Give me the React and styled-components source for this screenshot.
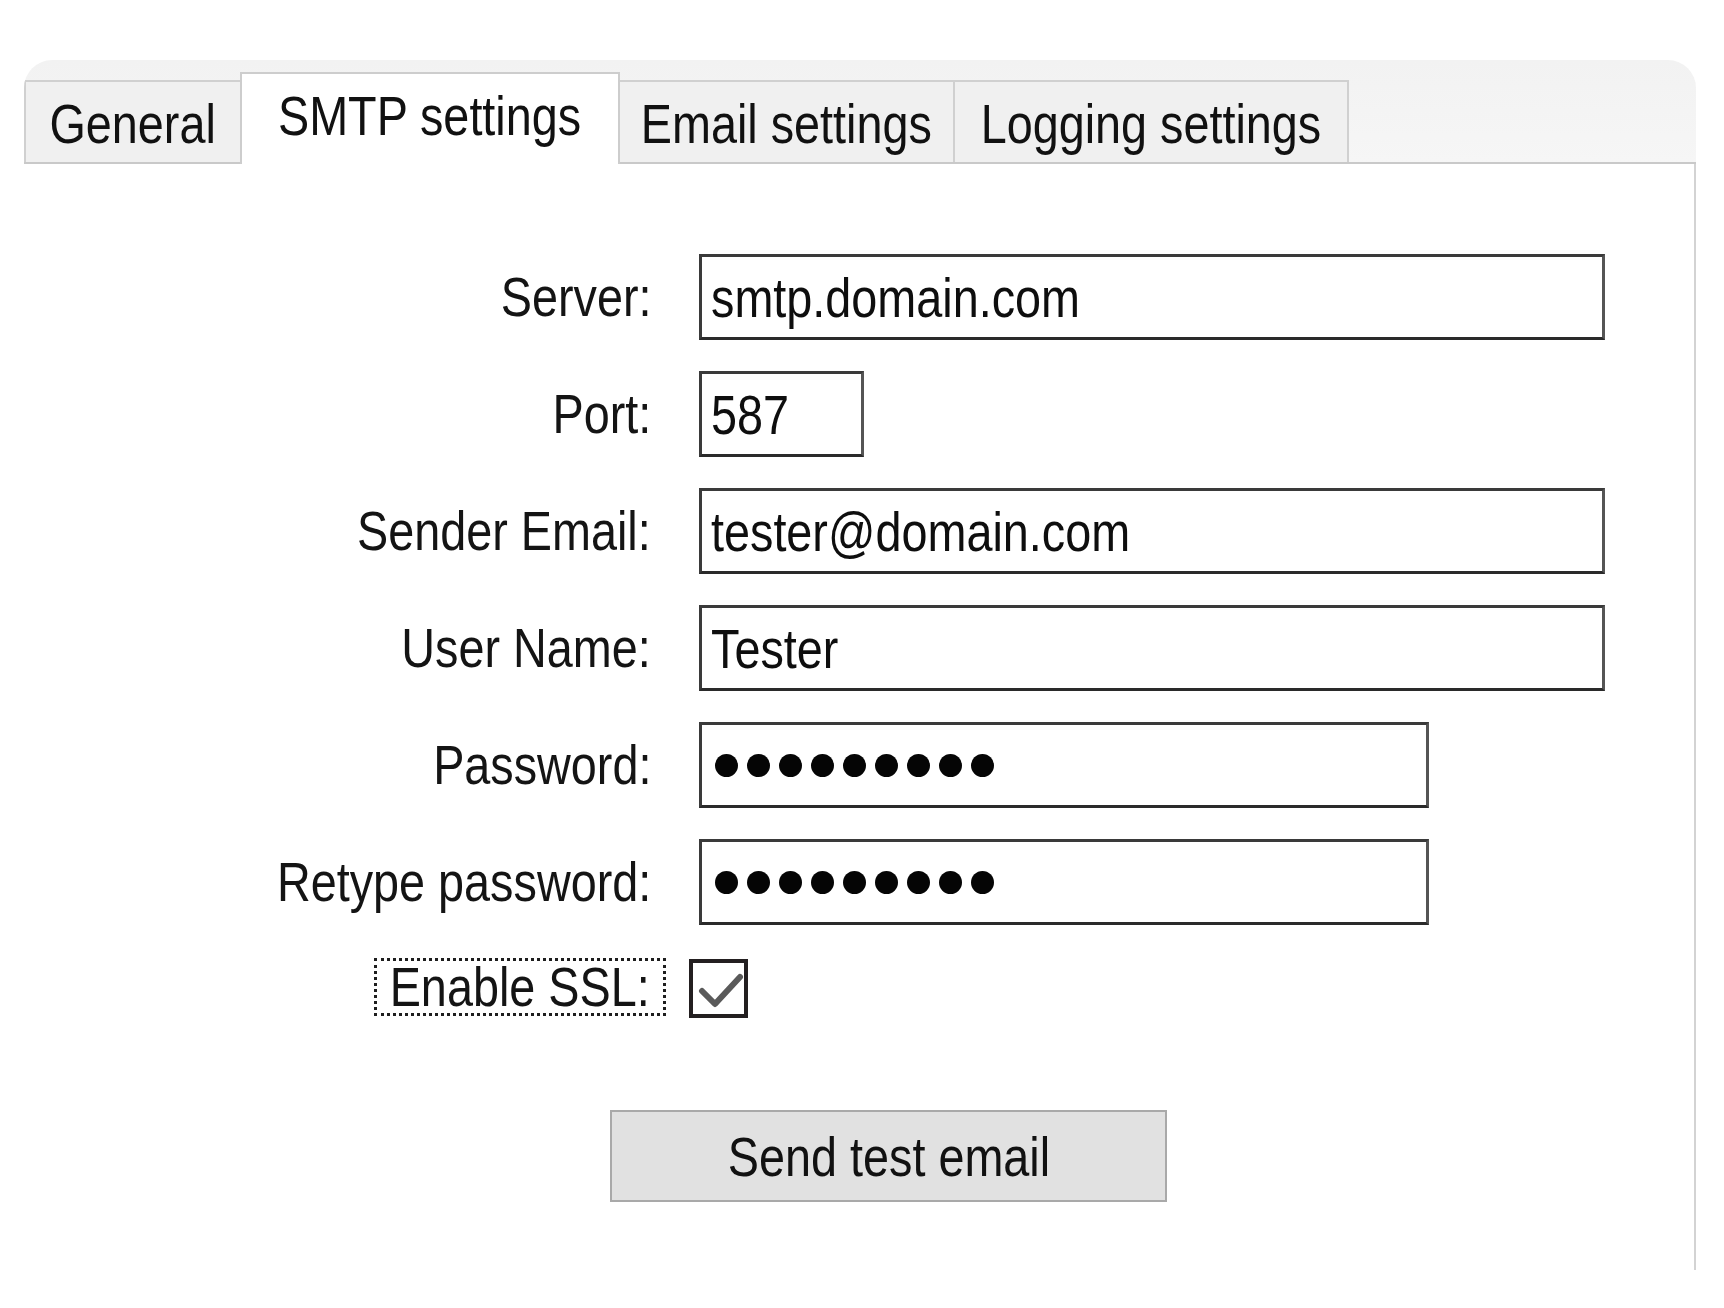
import React from 'react';
import styled, { createGlobalStyle } from 'styled-components';

const GlobalStyle = createGlobalStyle`
    html, body {
        margin: 0;
        padding: 0;
        background: #fff;
    }
    body {
        font-family: "Liberation Sans", Arial, sans-serif;
        color: #141414;
    }
`;

// the dialog font is a narrow sans; Liberation Sans squeezed to Arial Narrow proportions
const Narrow = styled.span`
    display: inline-block;
    white-space: nowrap;
    transform: scaleX(0.835);
    transform-origin: ${(p) => p.origin || 'center'};
`;

const Card = styled.div`
    margin: 60px 0 0 24px;
    width: 1672px;
    border-radius: 28px 28px 0 0;
    overflow: hidden;
`;

const TabStrip = styled.div`
    box-sizing: border-box;
    height: 104px;
    display: flex;
    align-items: flex-end;
    background: linear-gradient(#f2f2f2, #f6f6f6);
    border-bottom: 2px solid #c9c9c9;
`;

const Tab = styled.div`
    box-sizing: border-box;
    width: ${(p) => p.w}px;
    height: ${(p) => (p.active ? 92 : 82)}px;
    margin-left: ${(p) => (p.first ? 0 : -2)}px;
    margin-bottom: ${(p) => (p.active ? -2 : 0)}px;
    padding-top: 10px;
    display: flex;
    justify-content: center;
    border: 2px solid ${(p) => (p.active ? '#cdcdcd' : '#d0d0d0')};
    border-bottom: none;
    background: ${(p) => (p.active ? '#fff' : '#f0f0f0')};
    position: relative;
    z-index: ${(p) => (p.active ? 2 : 1)};
    font-size: 56px;
    line-height: 64px;
    color: #111;
`;

const Page = styled.div`
    box-sizing: border-box;
    height: 1106px;
    padding-top: 90px;
    background: #fff;
    border-right: 2px solid #d3d3d3;
`;

const Form = styled.div`
    display: grid;
    grid-template-columns: 627px 1fr;
    column-gap: 48px;
    row-gap: 31px;
    align-items: center;
`;

const Label = styled.div`
    justify-self: end;
    font-size: 56px;
    line-height: 64px;
    white-space: nowrap;
`;

const FocusLabel = styled.div`
    justify-self: end;
    box-sizing: border-box;
    width: 292px;
    height: 58px;
    margin-right: -15px;
    display: flex;
    align-items: center;
    justify-content: center;
    border: 3px dotted #1e1e1e;
    font-size: 56px;
    line-height: 52px;
`;

const Field = styled.div`
    box-sizing: border-box;
    width: ${(p) => p.w}px;
    height: 86px;
    display: flex;
    align-items: center;
    gap: 9px;
    padding-left: ${(p) => (p.dots ? 13 : 9)}px;
    border: 3px solid #3a3a3a;
    border-right-color: #555;
    border-bottom-color: #2a2a2a;
    background: #fff;
    font-size: 56px;
    color: #0e0e0e;
    overflow: hidden;
`;

const Dot = styled.span`
    flex: none;
    width: 23px;
    height: 23px;
    border-radius: 50%;
    background: #050505;
`;

const SslRow = styled.div`
    margin-top: 3px;
    margin-left: -10px;
`;

const CheckBox = styled.div`
    box-sizing: border-box;
    width: 59px;
    height: 59px;
    border: 4px solid #231f20;
    background: #fff;
    display: flex;
    align-items: center;
    justify-content: center;
`;

const ButtonRow = styled.div`
    margin-top: 92px;
    padding-left: 586px;
`;

const Button = styled.div`
    box-sizing: border-box;
    width: 557px;
    height: 92px;
    display: flex;
    align-items: center;
    justify-content: center;
    background: #e1e1e1;
    border: 2px solid #a9a9a9;
    font-size: 56px;
    color: #111;
`;

const tabs = [
    { name: 'General', w: 218 },
    { name: 'SMTP settings', w: 380, active: true },
    { name: 'Email settings', w: 337 },
    { name: 'Logging settings', w: 396 },
];

const fields = [
    { label: 'Server:', value: 'smtp.domain.com', w: 906 },
    { label: 'Port:', value: '587', w: 165 },
    { label: 'Sender Email:', value: 'tester@domain.com', w: 906 },
    { label: 'User Name:', value: 'Tester', w: 906 },
    { label: 'Password:', dots: 9, w: 730 },
    { label: 'Retype password:', dots: 9, w: 730 },
];

const App = () => {
    return (
        <>
            <GlobalStyle />
            <Card>
                <TabStrip>
                    {tabs.map((t, i) => (
                        <Tab key={t.name} w={t.w} active={t.active} first={i === 0}>
                            <Narrow>{t.name}</Narrow>
                        </Tab>
                    ))}
                </TabStrip>
                <Page>
                    <Form>
                        {fields.map((f) => (
                            <React.Fragment key={f.label}>
                                <Label>
                                    <Narrow origin="right">{f.label}</Narrow>
                                </Label>
                                <Field w={f.w} dots={f.dots}>
                                    {f.dots ? (
                                        Array.from({ length: f.dots }).map((_, i) => <Dot key={i} />)
                                    ) : (
                                        <Narrow origin="left">{f.value}</Narrow>
                                    )}
                                </Field>
                            </React.Fragment>
                        ))}
                        <FocusLabel>
                            <Narrow>Enable SSL:</Narrow>
                        </FocusLabel>
                        <SslRow>
                            <CheckBox>
                                <svg width="51" height="51" viewBox="0 0 51 51">
                                    <path
                                        d="M9 28 L22 41 L47 14"
                                        fill="none"
                                        stroke="#5a5a5a"
                                        strokeWidth="6"
                                        strokeLinecap="round"
                                        strokeLinejoin="round"
                                    />
                                </svg>
                            </CheckBox>
                        </SslRow>
                    </Form>
                    <ButtonRow>
                        <Button>
                            <Narrow>Send test email</Narrow>
                        </Button>
                    </ButtonRow>
                </Page>
            </Card>
        </>
    );
};

export default App;
